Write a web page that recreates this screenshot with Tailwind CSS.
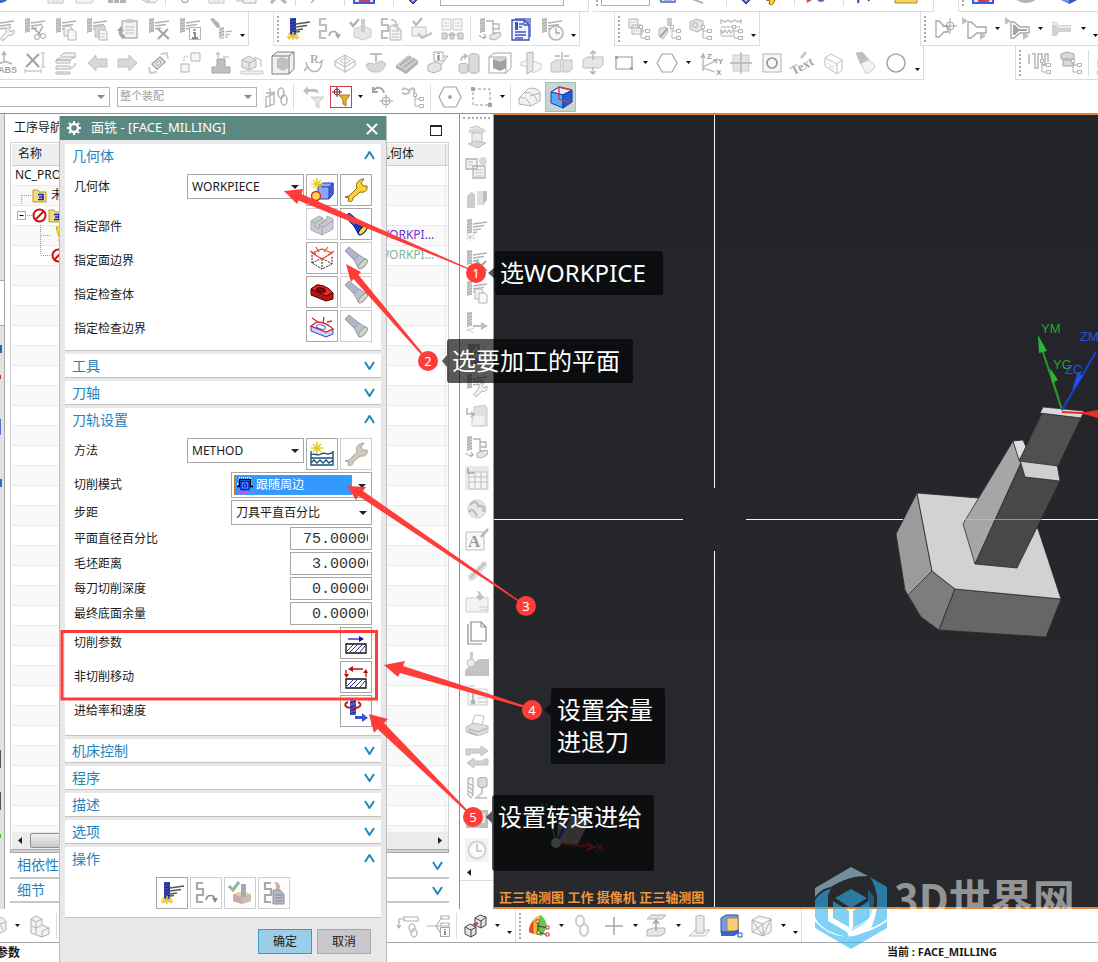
<!DOCTYPE html>
<html lang="zh-CN">
<head>
<meta charset="utf-8">
<meta name="viewport" content="width=device-width, initial-scale=1">
<title>面铣 - [FACE_MILLING]</title>
<script src="https://cdn.jsdelivr.net/npm/@tailwindcss/browser@4"></script>
</head>
<body class="relative flex h-screen flex-col overflow-hidden bg-white font-['Noto_Sans','Noto_Sans_CJK_SC',sans-serif] text-xs text-[#1a1a1a]">

<!-- Toolbars -->
<header class="shrink-0">
  <div class="flex h-3 items-end overflow-hidden">
    <div data-bar="globe ~ ~ page box hist iso | pin page copy xmark | curve ~ | redbox ~ | diamond ~ combo . ~" class="-ml-4 flex h-[34px] shrink-0 items-center border-r border-b border-[#dcdcdc] pb-1"></div>
    <div data-bar=": combos monitor axis ~ | diamond wrenchY | redarrow ~ | bluecurve ~ ruler ." class="ml-1 flex h-[34px] shrink-0 items-center border-r border-b border-[#dcdcdc] pb-1"></div>
    <div data-bar=": redbox ~ disc ~ bluecube" class="ml-6 flex h-[34px] flex-1 items-center border-b border-l border-[#dcdcdc] pb-1"></div>
  </div>
  <div class="flex h-[34px] overflow-hidden">
    <div data-bar="cutWrench cutScissors cutCopy cutPaste clipboard cutX cutInfo cutTorch _" class="-ml-3 flex shrink-0 items-center border-r border-b border-[#dcdcdc]"></div>
    <div data-bar=": generate path verify post okbox shop | machine report clock _" class="ml-6 flex shrink-0 items-center border-r border-b border-l border-[#dcdcdc]"></div>
    <div data-bar=": treeSheet treeDrill treeCube treeWave _" class="ml-[34px] flex shrink-0 items-center border-r border-b border-l border-[#dcdcdc]"></div>
    <div data-bar=": mill1 mill2 . mill3 . mill4 . _" class="ml-[160px] flex flex-1 items-center border-b border-l border-[#dcdcdc]"></div>
  </div>
  <div class="flex h-[34px] overflow-hidden">
    <div data-bar="abs xdim layers left right rotbox boxes pedestal isoRule cubeFrame rfit isoLines surface slab infoBox cylinders cubeFrame2 planeCut split splitV rectIcon . hexIcon . axes crossBox circleBox textIcon wireBox cone circle _" class="-ml-3 flex shrink-0 items-center border-r border-b border-[#dcdcdc]"></div>
    <div data-bar=": treePath treeBlocks | isoRule" class="ml-[91px] flex flex-1 items-center border-b border-l border-[#dcdcdc]"></div>
  </div>
  <div class="flex h-[33px] items-center overflow-hidden">
    <label class="relative -ml-px block w-[111px]"><select aria-label="过滤器" class="block h-[20px] w-full appearance-none border border-[#b4b4b4] bg-white"><option></option></select><svg class="pointer-events-none absolute top-2 right-[5px] h-1 w-2" viewBox="0 0 8 4"><path fill="#8a8a8a" d="M0 0h8L4 4z"/></svg></label>
    <label class="relative ml-[7px] block w-[140px]"><select aria-label="范围" class="block h-[20px] w-full appearance-none border border-[#b4b4b4] bg-white px-[2px] text-[11px] text-[#a0a0a0]"><option>整个装配</option></select><svg class="pointer-events-none absolute top-2 right-[5px] h-1 w-2" viewBox="0 0 8 4"><path fill="#8a8a8a" d="M0 0h8L4 4z"/></svg></label>
    <div data-bar="linkBox | undoFunnel filterOn . undoAxis undoTree | hexDot dashRect . | softBox cubeOn" class="ml-[3px] flex items-center"></div>
  </div>
</header>

<!-- Workspace -->
<main class="flex min-h-0 flex-1 border-t border-[#8d9298]">
  <div class="flex w-[5px] shrink-0 flex-col border-r border-[#a8a8a8] bg-[#e2e2e2]" aria-hidden="true">
    <div class="h-[167px] border-b border-[#a8a8a8]"></div>
    <div class="h-11 bg-white"></div>
    <div class="h-5 border-t border-[#a8a8a8]"></div>
    <div class="h-2 w-[2px] bg-[#2563c8]"></div>
    <div class="h-[22px]"></div>
    <div class="h-1 w-px bg-[#d03020]"></div>
    <div class="h-10"></div>
    <div class="h-4 w-px bg-[#4a74c8]"></div>
    <div class="h-11"></div>
    <div class="h-2 w-[2px] bg-[#3b66c4]"></div>
    <div class="h-[263px]"></div>
    <div class="h-[18px] w-px bg-[#555]"></div>
    <div class="h-6"></div>
    <div class="h-[18px] w-px bg-[#555]"></div>
    <div class="h-6"></div>
    <div class="h-1 w-px bg-[#40c020]"></div>
  </div>

  <section class="flex w-[454px] shrink-0 flex-col pr-[10px] pl-[5px]" aria-label="工序导航器">
    <div class="flex h-7 shrink-0 items-center justify-between pr-[7px] pl-1">
      <h2>工序导航器</h2>
      <button type="button" aria-label="最大化" class="mt-1 h-[11px] w-3 border border-t-2 border-[#222]"></button>
    </div>
    <div class="flex min-h-0 flex-1 flex-col border border-b-0 border-[#d2d2d2] p-px pr-0 pb-0">
      <div class="min-h-0 flex-1 overflow-hidden">
        <table class="w-full table-fixed border-collapse">
          <thead>
            <tr class="h-[21px] border-b border-[#cfcfcf] bg-[#efefef] text-left">
              <th class="w-[366px] pl-[6px] font-normal">名称</th>
              <th class="border-r border-[#cfcfcf] font-normal">几何体</th>
              <th class="w-[3px]"></th>
            </tr>
          </thead>
          <tbody id="rows">
            <tr class="h-5 border-b border-[#ebebeb] leading-none"><td class="pl-[3px]">NC_PROGRAM</td><td class="border-r border-[#ebebeb]"></td><td></td></tr>
            <tr class="h-5 border-b border-[#ebebeb] bg-[#f9f9f9] leading-none"><td><div class="flex h-[19px] items-center gap-1 pl-[9px]"><svg class="h-5 w-[10px] shrink-0" viewBox="0 0 10 20"><path d="M.5 10V20M1 10.500h9" stroke="#999" stroke-dasharray="1 1" fill="none"/></svg><svg class="-ml-[3px] h-4 w-[15px] shrink-0"><use href="#folder"/></svg>未用项</div></td><td class="border-r border-[#ebebeb]"></td><td></td></tr>
            <tr class="h-5 border-b border-[#ebebeb] leading-none"><td><div class="flex h-[19px] items-center pl-[5px]"><svg class="h-5 w-[15px] shrink-0" viewBox="0 0 15 20"><path d="M.5 6.500h8v8h-8z" fill="#fff" stroke="#aaa"/><path d="M2.500 10.500h4" stroke="#000"/><path d="M10 10.500h5" stroke="#999" stroke-dasharray="1 1"/></svg><svg class="h-[15px] w-[15px] shrink-0"><use href="#stop"/></svg><svg class="ml-px h-4 w-[15px] shrink-0"><use href="#folder"/></svg></div></td><td class="border-r border-[#ebebeb]"></td><td></td></tr>
            <tr class="h-5 border-b border-[#ebebeb] bg-[#f9f9f9] leading-none"><td><div class="flex h-[19px] items-center pl-7"><svg class="h-5 w-[15px] shrink-0" viewBox="0 0 15 20"><path d="M.5 0v20M1 10.500h9" stroke="#999" stroke-dasharray="1 1" fill="none"/></svg><svg class="h-[18px] w-3 shrink-0" viewBox="0 0 12 18"><path d="M1 1h9l-2 10H4zM4 13h4v3H4z" fill="#fde92c" stroke="#c9a800"/></svg></div></td><td class="border-r border-[#ebebeb] text-[#6a35d0]">WORKPI...</td><td></td></tr>
            <tr class="h-5 border-b border-[#ebebeb] leading-none"><td><div class="flex h-[19px] items-center pl-7"><svg class="h-5 w-[11px] shrink-0" viewBox="0 0 11 20"><path d="M.5 0v10M1 10.500h9" stroke="#999" stroke-dasharray="1 1" fill="none"/></svg><svg class="h-[15px] w-[15px] shrink-0"><use href="#stop"/></svg></div></td><td class="border-r border-[#ebebeb] text-[#7fb09c]">WORKPI...</td><td></td></tr>
          </tbody>
        </table>
      </div>
      <div class="flex h-[17px] shrink-0 items-center justify-between bg-[#ececec] px-[6px]" aria-hidden="true">
        <svg class="h-[7px] w-1" viewBox="0 0 4 7"><path d="M4 0v7L0 3.500z" fill="#222"/></svg>
        <div class="mr-40 ml-2 h-[15px] flex-1 rounded-[2px] border border-[#8f8f8f] bg-linear-to-b from-[#f2f2f2] to-[#c8c8c8]"></div>
        <svg class="h-[7px] w-1" viewBox="0 0 4 7"><path d="M0 0v7l4-3.500z" fill="#222"/></svg>
      </div>
    </div>
    <div class="h-1 shrink-0 border border-[#aaa] bg-[#d0d0d0]"></div>
    <button type="button" class="flex h-[26px] shrink-0 items-center justify-between border-b-2 border-[#c8c8c8] pr-[6px] pl-[7px] text-sm text-[#2483b9]">相依性<svg class="h-[9px] w-[11px]"><use href="#down"/></svg></button>
    <button type="button" class="flex h-6 shrink-0 items-center justify-between border-b-2 border-[#c8c8c8] pr-[6px] pl-[7px] text-sm text-[#2483b9]">细节<svg class="h-[9px] w-[11px]"><use href="#down"/></svg></button>
    <div class="h-[6px] shrink-0"></div>
  </section>

  <nav class="flex w-[34px] shrink-0 flex-col border-l border-[#8d9298]" aria-label="加工工具条">
    <div class="mx-[3px] mt-[3px] h-1 border-t-2 border-dotted border-[#aaa]"></div>
    <div data-bar="wheel wheelDoc mouldBox generate0 cutX cutCopy cutArrow boltBox cutWrench boxTurn machine gridBox globeG letterA pencil folderG pages ramp sheetPin printer swap drillCyl screen clockBig" class="flex flex-col items-center"></div>
    <div class="flex h-4 items-start border-b border-[#dcdcdc] pt-1 pl-[7px]"><svg class="h-[7px] w-1" viewBox="0 0 4 7"><path d="M4 0v7L0 3.500z" fill="#222"/></svg></div>
  </nav>

  <section class="relative min-w-0 flex-1 overflow-hidden border-t border-b-2 border-l border-[#e88a34] bg-linear-to-b from-[#232429] to-[#28292d]" aria-label="图形窗口">
    <svg class="absolute inset-0 h-full w-full" viewBox="494 115 604 792" preserveAspectRatio="xMinYMin slice" font-family="Liberation Sans, sans-serif" font-size="13">
      <path d="M714.500 114V488M714.500 551V908M494 519.500H683M746 519.500H1098" stroke="#f4f4f4"/>
      <g stroke="#2c2c2e" stroke-linejoin="round" stroke-width=".8">
        <path fill="#9b9b9b" d="M917 493L932 571 911 601 905 590 896 534z"/>
        <path fill="#7d7d7d" d="M932 571L955 589 939 630 921 617 908 595z"/>
        <path fill="#666" d="M955 589L1061 599 1046 637 939 630z"/>
        <path fill="#d2d2d2" d="M917 493L1003 500 1038 529 1061 599 955 589 932 571z"/>
        <path fill="#a6a6a6" d="M1013 441L1021 463 975 564 963 524z"/>
        <path fill="#484848" d="M1021 463L1060 481 1017 568 975 564z"/>
        <path fill="#cfcfcf" d="M1020 460L1057 464 1060 481 1025 477z"/>
        <path fill="#dedede" d="M1013 441L1023 440 1027 449 1019 460z"/>
        <path fill="#505050" d="M1042 413L1081 418 1058 466 1019 461z"/>
        <path fill="#d9d9d9" d="M1043 407L1084 411 1081 418 1040 413z"/>
      </g>
      <path d="M963 519.500H1043" stroke="#c8c8c8" stroke-opacity=".6"/>
      <path d="M1062 410L1041 346M1062 410L1052 378" stroke="#27962d" stroke-width="2"/><path d="M1038 335l9 16-8 2zM1050 368l8 12-6 3z" fill="#2fb336"/>
      <path d="M1062 410L1096 352" stroke="#1c3fd0" stroke-width="2"/><path d="M1078 372l5 5-11 13z" fill="#2450f0"/>
      <path d="M1062 412l36 2" stroke="#e03028" stroke-width="2"/><path d="M1098 410v8l-18-5z" fill="#e03028"/>
      <g fill="#27a52e"><text x="1041" y="333">YM</text><text x="1053" y="369">YC</text></g>
      <g fill="#2352e8"><text x="1080" y="341">ZM</text><text x="1065" y="374">ZC</text></g>
      <path fill="#8d8d8d" d="M558 822l16-8 15 8-12 24-20-4z"/><path d="M556 843l-7-30" stroke="#2c9632" stroke-width="2"/><path d="M556 843l13-24" stroke="#2444c8" stroke-width="3"/><path d="M556 843l37 4M586 843l9 4-9 3" stroke="#c03030" stroke-width="2"/><circle cx="556" cy="843" r="5" fill="#aaa"/>
      <text x="595" y="852" fill="#d03838">X</text><text x="540" y="812" fill="#2c9632">Y</text>
    </svg>
    <p class="absolute bottom-0 left-[5px] text-[13px] leading-5 font-bold whitespace-nowrap text-[#f0963c]">正三轴测图 工作 摄像机 正三轴测图</p>
  </section>
</main>

<footer class="shrink-0">
  <div class="flex h-[34px] overflow-hidden border-b border-[#a8a8a8]">
    <div data-bar="softBox . isoStack | pad linkArrow treeInfo | twoCubes . _" class="-ml-5 flex shrink-0 items-center border-r border-[#dcdcdc]"></div>
    <div data-bar=": rainbow . chain plus . liftBox . cylPlane coloredBox meshBox . _" class="flex items-center border-r border-[#dcdcdc]"></div>
  </div>
  <div class="flex h-[19px] items-center font-bold">
    <span class="-ml-1 w-[891px]">参数</span><span class="text-[11px] whitespace-nowrap">当前 : FACE_MILLING</span>
  </div>
</footer>

<!-- Floating operation dialog -->
<form class="absolute top-[116px] bottom-0 left-[59px] flex w-[328px] flex-col border-r border-l border-[#bcbcbc] bg-[#e8e8e8]" role="dialog" aria-label="面铣">
  <div class="mb-1 flex h-6 shrink-0 items-center bg-[#5b8982] pr-2 pl-[7px] text-[13px] text-white">
    <svg class="mr-[10px] h-[14px] w-[14px]" viewBox="0 0 14 14"><circle cx="7" cy="7" r="4" fill="none" stroke="#fff" stroke-width="2.400"/><path d="M7 0v3M7 11v3M0 7h3M11 7h3M2 2l2 2M10 10l2 2M12 2l-2 2M4 10l-2 2" stroke="#fff" stroke-width="2"/></svg>
    <span class="flex-1">面铣 - [FACE_MILLING]</span>
    <button type="button" aria-label="关闭"><svg class="mt-[2px] h-3 w-3" viewBox="0 0 12 12"><path d="M1 1l10 10M11 1L1 11" stroke="#fff" stroke-width="2"/></svg></button>
  </div>
  <div class="flex shrink-0 flex-col gap-[3px] px-[5px]">
    <section class="border-b border-[#c4c4c4] bg-white">
      <button type="button" class="flex h-[23px] w-full items-center justify-between pr-[6px] pl-[7px] text-sm text-[#2483b9]">几何体<svg class="h-[9px] w-[11px]"><use href="#up"/></svg></button>
      <div class="flex flex-col gap-[2px] px-[9px] pt-[7px] pb-2">
        <div class="flex gap-[2px]"><label for="geo" class="flex h-[25px] flex-1 items-center">几何体</label>
          <span class="relative block w-[117px]"><select id="geo" class="block h-[25px] w-full appearance-none border border-[#a8a8a8] bg-white pl-1"><option>WORKPIECE</option></select><svg class="pointer-events-none absolute top-[11px] right-[5px] h-1 w-2" viewBox="0 0 8 4"><path d="M0 0h8L4 4z" fill="#222"/></svg></span>
          <button type="button" data-icon="newGeo" aria-label="新建几何体" class="flex size-8 items-center justify-center border border-[#a8a8a8]"></button><button type="button" data-icon="wrenchY" aria-label="编辑几何体" class="flex size-8 items-center justify-center border border-[#a8a8a8]"></button></div>
        <div class="flex gap-[2px]"><span class="flex flex-1 items-center pt-1.5">指定部件</span><button type="button" data-icon="part" aria-label="选择部件" class="flex size-8 items-center justify-center border border-[#cfcfcf]"></button><button type="button" data-icon="torchOn" aria-label="显示部件" class="flex size-8 items-center justify-center border border-[#a8a8a8]"></button></div>
        <div class="flex gap-[2px]"><span class="flex flex-1 items-center pt-1.5">指定面边界</span><button type="button" data-icon="faceBound" aria-label="选择面边界" class="flex size-8 items-center justify-center border border-[#a8a8a8]"></button><button type="button" data-icon="torch" aria-label="显示面边界" class="flex size-8 items-center justify-center border border-[#cfcfcf]"></button></div>
        <div class="flex gap-[2px]"><span class="flex flex-1 items-center pt-1.5">指定检查体</span><button type="button" data-icon="checkBody" aria-label="选择检查体" class="flex size-8 items-center justify-center border border-[#a8a8a8]"></button><button type="button" data-icon="torch" aria-label="显示检查体" class="flex size-8 items-center justify-center border border-[#cfcfcf]"></button></div>
        <div class="flex gap-[2px]"><span class="flex flex-1 items-center pt-1.5">指定检查边界</span><button type="button" data-icon="checkBound" aria-label="选择检查边界" class="flex size-8 items-center justify-center border border-[#a8a8a8]"></button><button type="button" data-icon="torch" aria-label="显示检查边界" class="flex size-8 items-center justify-center border border-[#cfcfcf]"></button></div>
      </div>
    </section>
    <button type="button" class="flex h-6 w-full items-center justify-between border-b border-[#c4c4c4] bg-white pr-[6px] pl-[7px] text-sm text-[#2483b9]">工具<svg class="h-[9px] w-[11px]"><use href="#down"/></svg></button>
    <button type="button" class="flex h-6 w-full items-center justify-between border-b border-[#c4c4c4] bg-white pr-[6px] pl-[7px] text-sm text-[#2483b9]">刀轴<svg class="h-[9px] w-[11px]"><use href="#down"/></svg></button>
    <section class="border-b border-[#c4c4c4] bg-white">
      <button type="button" class="flex h-[23px] w-full items-center justify-between pr-[6px] pl-[7px] text-sm text-[#2483b9]">刀轨设置<svg class="h-[9px] w-[11px]"><use href="#up"/></svg></button>
      <div class="flex flex-col gap-[2px] px-[9px] pt-[7px] pb-2">
        <div class="flex gap-[2px]"><label for="method" class="flex h-[25px] flex-1 items-center">方法</label>
          <span class="relative block w-[117px]"><select id="method" class="block h-[25px] w-full appearance-none border border-[#a8a8a8] bg-white pl-1"><option>METHOD</option></select><svg class="pointer-events-none absolute top-[11px] right-[5px] h-1 w-2" viewBox="0 0 8 4"><path d="M0 0h8L4 4z" fill="#222"/></svg></span>
          <button type="button" data-icon="newMethod" aria-label="新建方法" class="flex size-8 items-center justify-center border border-[#a8a8a8]"></button><button type="button" data-icon="wrenchG" aria-label="编辑方法" class="flex size-8 items-center justify-center border border-[#cfcfcf]"></button></div>
        <div class="flex items-center"><label for="mode" class="flex-1">切削模式</label>
          <span class="relative flex h-[26px] w-[141px] items-center border border-[#a8a8a8] p-[2px]"><select id="mode" class="h-5 w-[118px] appearance-none border border-dotted border-[#d08030] bg-[#3399ff] pl-[21px] text-white"><option>跟随周边</option></select>
            <svg class="pointer-events-none absolute top-1 left-[5px] h-4 w-4" viewBox="0 0 16 16"><path d="M0 7h2V1h12v6h2" fill="none" stroke="#fff" stroke-width="2" stroke-dasharray="1 1"/><path d="M0 9.500h2.500V2.500h11v7H16" fill="none" stroke="#000" stroke-width="1.600"/><path d="M4 4.500h8v8H4z" fill="#4a90ff" stroke="#0010d8" stroke-width="1.300"/><path d="M6.500 7h3v3h-3z" fill="none" stroke="#0010d8"/><path d="M0 15.500h16" stroke="#f040e0" stroke-dasharray="4 1 1 1"/></svg>
            <svg class="pointer-events-none absolute top-[11px] right-[5px] h-1 w-2" viewBox="0 0 8 4"><path d="M0 0h8L4 4z" fill="#222"/></svg></span></div>
        <div class="flex items-center"><label for="step" class="flex-1">步距</label>
          <span class="relative block w-[141px]"><select id="step" class="block h-[25px] w-full appearance-none border border-[#a8a8a8] bg-white pl-1"><option>刀具平直百分比</option></select><svg class="pointer-events-none absolute top-[11px] right-[5px] h-1 w-2" viewBox="0 0 8 4"><path d="M0 0h8L4 4z" fill="#222"/></svg></span></div>
        <div class="flex items-center"><label for="pct" class="flex-1">平面直径百分比</label><span class="flex h-[23px] w-[82px] overflow-hidden border border-[#a8a8a8] pr-[3px]"><input id="pct" value="75.00000" class="w-full min-w-0 pt-[2px] pl-3 font-['Liberation_Mono',monospace] text-[15px] text-[#333] outline-none"></span></div>
        <div class="flex items-center"><label for="blank" class="flex-1">毛坯距离</label><span class="flex h-[23px] w-[82px] overflow-hidden border border-[#a8a8a8] pr-[3px]"><input id="blank" value="3.00000" class="w-full min-w-0 pt-[2px] pl-[21px] font-['Liberation_Mono',monospace] text-[15px] text-[#333] outline-none"></span></div>
        <div class="flex items-center"><label for="depth" class="flex-1">每刀切削深度</label><span class="flex h-[23px] w-[82px] overflow-hidden border border-[#a8a8a8] pr-[3px]"><input id="depth" value="0.00000" class="w-full min-w-0 pt-[2px] pl-[21px] font-['Liberation_Mono',monospace] text-[15px] text-[#333] outline-none"></span></div>
        <div class="flex items-center"><label for="stock" class="flex-1">最终底面余量</label><span class="flex h-[23px] w-[82px] overflow-hidden border border-[#a8a8a8] pr-[3px]"><input id="stock" value="0.00000" class="w-full min-w-0 pt-[2px] pl-[21px] font-['Liberation_Mono',monospace] text-[15px] text-[#333] outline-none"></span></div>
        <div class="flex items-center justify-between">切削参数<button type="button" data-icon="cutParam" aria-label="切削参数" class="flex size-8 items-center justify-center border border-[#a8a8a8]"></button></div>
        <div class="flex items-center justify-between">非切削移动<button type="button" data-icon="nonCut" aria-label="非切削移动" class="flex size-8 items-center justify-center border border-[#a8a8a8]"></button></div>
        <div class="flex items-center justify-between">进给率和速度<button type="button" data-icon="feed" aria-label="进给率和速度" class="flex size-8 items-center justify-center border border-[#a8a8a8]"></button></div>
      </div>
    </section>
    <button type="button" class="flex h-6 w-full items-center justify-between border-b border-[#c4c4c4] bg-white pr-[6px] pl-[7px] text-sm text-[#2483b9]">机床控制<svg class="h-[9px] w-[11px]"><use href="#down"/></svg></button>
    <button type="button" class="flex h-6 w-full items-center justify-between border-b border-[#c4c4c4] bg-white pr-[6px] pl-[7px] text-sm text-[#2483b9]">程序<svg class="h-[9px] w-[11px]"><use href="#down"/></svg></button>
    <button type="button" class="flex h-6 w-full items-center justify-between border-b border-[#c4c4c4] bg-white pr-[6px] pl-[7px] text-sm text-[#2483b9]">描述<svg class="h-[9px] w-[11px]"><use href="#down"/></svg></button>
    <button type="button" class="flex h-6 w-full items-center justify-between border-b border-[#c4c4c4] bg-white pr-[6px] pl-[7px] text-sm text-[#2483b9]">选项<svg class="h-[9px] w-[11px]"><use href="#down"/></svg></button>
    <section class="border-b border-[#c4c4c4] bg-white">
      <button type="button" class="flex h-[23px] w-full items-center justify-between pr-[6px] pl-[7px] text-sm text-[#2483b9]">操作<svg class="h-[9px] w-[11px]"><use href="#up"/></svg></button>
      <div class="flex justify-center gap-[2px] pt-[7px] pb-2">
        <button type="button" data-icon="generate" aria-label="生成" class="flex size-8 items-center justify-center border border-[#a8a8a8]"></button>
        <button type="button" data-icon="path" aria-label="重播" class="flex size-8 items-center justify-center border border-[#cfcfcf]"></button>
        <button type="button" data-icon="verifyC" aria-label="确认" class="flex size-8 items-center justify-center border border-[#cfcfcf]"></button>
        <button type="button" data-icon="postC" aria-label="列表" class="flex size-8 items-center justify-center border border-[#cfcfcf]"></button>
      </div>
    </section>
  </div>
  <div class="flex shrink-0 justify-end gap-[5px] pt-[11px] pr-[15px]">
    <button type="submit" class="h-[25px] w-[54px] border border-[#3f97c9] bg-[#9bcde8]">确定</button>
    <button type="button" class="h-[25px] w-[54px] border border-[#a8a8a8] bg-[#c9c9cd]">取消</button>
  </div>
</form>

<!-- Tutorial annotations over the workspace -->
<svg class="pointer-events-none absolute top-0 left-0" width="1098" height="962" viewBox="0 0 1098 962" font-family="Noto Sans, sans-serif" font-size="13" text-anchor="middle" aria-hidden="true">
  <path d="M62 631.500H376.500V699H62z" fill="none" stroke="#fe3c39" stroke-width="3"/>
  <g fill="#fe3c39">
    <path d="M284 191L303 189 301.500 194 476 271.500V272.500L298.500 200.500 297 204z"/>
    <path d="M346 264L361 272 358.500 275 429 361H427L353.500 279 351 282z"/>
    <path d="M347 486L366 487 363 491 527 606H525L358.500 496 356 500z"/>
    <path d="M384 665L405 661 403 666 532 708V710L400 673 398 677z"/>
    <path d="M369 714L388 719 384 723 474 817H472L377.500 729 374 733z"/>
  </g>
  <g fill="#fe3c39"><circle cx="476" cy="273" r="10"/><circle cx="428" cy="361" r="10"/><circle cx="526" cy="606" r="10"/><circle cx="532" cy="710" r="10"/><circle cx="473" cy="817" r="10"/></g>
  <g fill="#fff"><text x="476" y="278">1</text><text x="428" y="366">2</text><text x="526" y="611">3</text><text x="532" y="715">4</text><text x="473" y="822">5</text></g>
  <path d="M495 267v12l-7-6zM447 355v12l-5-6zM551 704v12l-7-6zM492 811v12l-6-6z" fill="#000" fill-opacity=".65"/>
</svg>
<div class="absolute top-[251px] left-[495px] rounded-[3px] bg-black/65 py-[6px] pr-[17px] pl-[5px] text-2xl text-white">选WORKPICE</div>
<div class="absolute top-[339px] left-[447px] rounded-[3px] bg-black/65 py-[6px] pr-[13px] pl-[5px] text-2xl text-white">选要加工的平面</div>
<div class="absolute top-[688px] left-[551px] rounded-[3px] bg-black/65 py-[6px] pr-3 pl-[6px] text-2xl text-white">设置余量<br>进退刀</div>
<div class="absolute top-[795px] left-[492px] h-[76px] rounded-[3px] bg-black/65 py-[6px] pr-3 pl-[6px] text-2xl text-white">设置转速进给</div>

<!-- Site watermark -->
<div class="absolute top-[867px] left-[815px] flex items-start gap-[7px]">
  <svg class="h-[82px] w-[72px]" viewBox="0 0 72 82"><g fill="#2db0f0" fill-opacity=".6"><path d="M36 0L53 9C40 9 28 12 16 20 9 21 4 25 0 30V21z" fill="#a6d2e4"/><path d="M55 10L72 20V52C67 56 62 59 56 61 64 44 65 26 55 10z"/><path d="M0 33C5 26 10 23 16 22L13 28V54L32 65 34 70C18 68 4 60 0 50z"/><path d="M0 54C10 66 28 74 45 67 55 64 66 59 72 54V61L36 82 0 61z"/><path d="M53 22V50L38 59 36 64C48 60 60 50 59 30z" fill-opacity=".35"/><path d="M36 22L52 31 36 41 20 31z"/><path d="M18 34L34 44V60L18 51z"/><path d="M54 34L38 44V60L54 51z"/></g></svg>
  <span class="mt-3 font-['Noto_Sans_CJK_SC',sans-serif] text-[42px] leading-9 font-bold whitespace-nowrap text-white/50">3D世界网</span>
</div>

<svg class="hidden" aria-hidden="true">
  <symbol id="up" viewBox="0 0 11 9"><path d="M1 8l4.500-7L10 8" fill="none" stroke="#2387b8" stroke-width="2"/></symbol>
  <symbol id="down" viewBox="0 0 11 9"><path d="M1 1l4.500 7L10 1" fill="none" stroke="#2387b8" stroke-width="2"/></symbol>
  <symbol id="folder" viewBox="0 0 15 16"><path d="M1 3h5l1 2h7v10H1z" fill="#f5dc7a" stroke="#b89a35"/><path d="M6 7.500h5v5H6M7 10h4" stroke="#1020c8" stroke-width="1.500" fill="none"/></symbol>
  <symbol id="stop" viewBox="0 0 15 15"><circle cx="7.500" cy="7.500" r="6" fill="#fff" stroke="#cc1010" stroke-width="2"/><path d="M3.500 11.500l8-8" stroke="#cc1010" stroke-width="2"/></symbol>
</svg>

<script>
const cut = '<path d="M2 1h5v14H2z" fill="#bbb"/><path d="M2 4l5-2M2 7l5-2M2 10l5-2M2 13l5-2M2 15.500l5-2" stroke="#8c8c8c"/>';
const fins = '<path d="M8 6l14-2M8 9l11-1.500M8 12l6-1" stroke="#999" stroke-width="1.300"/>';
const tree = '<path d="M14 10v11h4M14 14h4" stroke="#999"/><path d="M18.500 12.500h4v3h-4zM18.500 19.500h4v3h-4zM12.500 8.500h3v3h-3z" stroke="#999" fill="#fff"/>';
const spanner = '<path d="M9 21l5-6c-1-3 2-6 5-5l-2 3 2 2 3-2c1 4-2 6-5 5l-5 5c-2 1-4-1-3-2z" stroke="#999" fill="#eee"/>';
const cube = '<path d="M3 8l9-4 9 4v9l-9 5-9-5z" fill="#dcdcdc" stroke="#aaa"/><path d="M3 8l9 4 9-4M12 12v10" stroke="#aaa"/>';
const sheet = '<path d="M11 9h7l4 4v10H11z" fill="#f2f2f2" stroke="#999"/><path d="M13 14h7M13 17h7M13 20h7M18 9v4h4" stroke="#aaa"/>';
const snake = '<path d="M9 2H3v6h6v6H3v7h6" stroke="#aaa" stroke-width="2.200"/>';
const mill = '<path d="M3 4h3l6 5h9v6h-9l-6 5H3z" stroke="#888" fill="#fff" stroke-width="1.300"/>';
const axes = '<path d="M5 20V4M3 7l2-4 2 4M5 16l14-7M5 17l12 4M15 9l4-.500-1 4" stroke="#999" stroke-width="1.300"/>';
const torchShape = (body, head, lens, line) => '<path d="M1 5L5 1l10 8-5 5z" fill="' + body + '" stroke="' + line + '"/><path d="M10 14l5-5 8 5c0 4-4 8-8 9z" fill="' + head + '" stroke="' + line + '"/><ellipse cx="19" cy="18" rx="2.500" ry="6" transform="rotate(42 19 18)" fill="' + lens + '" stroke="' + line + '"/>';
const icons = {
  globe: '<circle cx="12" cy="12" r="10" fill="#2c9f48"/><path d="M12 22a10 10 0 0 0 10-10l-10-4z" fill="#3568c8"/>',
  page: '<path d="M5 2h15v20H5z" fill="#f2f2f2" stroke="#aaa"/><path d="M8 14h9M8 17h9M8 20h9" stroke="#ccc"/>',
  box: '<path d="M2 8h15l5 3-4 11H2z" fill="#eee" stroke="#b8b8b8"/>',
  hist: '<path d="M3 14h5v8H3zM9 10h5v12H9zM15 13h6v9h-6z" fill="#999"/>',
  iso: cube + '<circle cx="17" cy="17" r="5" stroke="#aaa" fill="#eee"/>',
  pin: '<path d="M12 2v12" stroke="#aaa"/><circle cx="12" cy="18" r="3.500" stroke="#999" stroke-width="1.500"/>',
  copy: '<path d="M2 6h13v14H2z" stroke="#aaa" fill="#fff"/><path d="M8 10h13v12H8z" stroke="#999" fill="#f2f2f2"/><path d="M10 15h9M10 18h9" stroke="#bbb"/>',
  xmark: '<path d="M4 8l16 14M20 6L5 22" stroke="#999" stroke-width="3"/>',
  curve: '<path d="M18 4c-2 10-6 14-10 18" stroke="#999" stroke-width="1.500"/>',
  redbox: '<path d="M2 2h20v20H2z" stroke="#3a5be0" stroke-width="2" fill="#dfe6ff"/><path d="M8 8v12h10M8 14l10 6" stroke="#d04050" stroke-width="2"/>',
  diamond: '<path d="M3 14l9-8 9 8-9 9z" fill="#4a5cb8" stroke="#223080"/><path d="M7 14l5 7 5-7" fill="#cfd6ff"/>',
  monitor: '<path d="M7 8h14v13H7z" fill="#dfe4fb" stroke="#5060c0" stroke-width="1.500"/><path d="M10 16h8M10 19h8" stroke="#7080d0"/><path d="M1 16l6 3" stroke="#50a050" stroke-width="2"/>',
  axis: '<path d="M4 17l14 5M4 17l5-5M8 13H4v4" stroke="#888" stroke-width="1.500"/>',
  redarrow: '<path d="M3 10l12 6-10 6z" fill="#d84a40"/><circle cx="19" cy="17" r="4" fill="#536cb8"/>',
  bluecurve: '<path d="M6 10c-3 4 3 6 1 12M14 10l4 10" stroke="#3040b0" stroke-width="2"/><path d="M12 8l8 8" stroke="#d04040" stroke-width="2"/>',
  ruler: '<path d="M1 14h22v8H1z" fill="#f3d568" stroke="#b08a20"/><path d="M4 14v4M7 14v3M10 14v4M13 14v3M16 14v4M19 14v3" stroke="#a07818"/>',
  disc: '<ellipse cx="12" cy="15" rx="11" ry="7" fill="#999"/><ellipse cx="12" cy="14" rx="5" ry="3" fill="#eee"/>',
  bluecube: '<path d="M2 9l10 4 10-4v9l-10 5-10-5z" fill="#6f8fe0"/><path d="M12 13l10-4v9l-10 5z" fill="#3558c0"/>',
  cutWrench: cut + fins + spanner,
  cutScissors: cut + fins + '<path d="M9 10l9 8M20 9l-5 9" stroke="#888" stroke-width="1.500"/><circle cx="14" cy="20" r="2.500" stroke="#888"/><circle cx="20" cy="19" r="2.500" stroke="#888"/>',
  cutCopy: cut + fins + '<path d="M10 9h6l2 2v8h-8z" fill="#eee" stroke="#999"/><path d="M14 13h6l2 2v8h-8z" fill="#f8f8f8" stroke="#999"/>',
  cutPaste: cut + fins + '<path d="M10 9h10v11H10z" fill="#ccc" stroke="#aaa"/><path d="M14 13h6l2 2v8h-8z" fill="#f4f4f4" stroke="#999"/><path d="M15 17h5M15 20h5" stroke="#bbb"/>',
  clipboard: '<path d="M6 4h15v17H6z" fill="#eee" stroke="#999" stroke-width="1.300"/><path d="M10 2h7v4h-7z" fill="#bbb"/><path d="M9 10h9M9 13h9M9 16h9" stroke="#aaa"/><path d="M9 21C4 21 2 18 3 14L1 14l4-5 3 5H6c-1 3 1 4 3 4z" fill="#888"/>',
  cutX: cut + fins + '<path d="M11 12l11 10M21 12L11 22" stroke="#888" stroke-width="2.200"/>',
  cutInfo: cut + fins + '<path d="M11.500 10.500h11v12h-11z" fill="#fff" stroke="#999"/><path d="M15 16h2v5M14 21h6M16.500 12v2" stroke="#666" stroke-width="2"/>',
  cutTorch: '<path d="M1 2l3-1 6 5 1 4-3 1-4-5z" fill="#999"/><path d="M10 10h5v12h-5z" fill="#c8c8c8"/><path d="M10 13l5-2M10 16l5-2M10 19l5-2" stroke="#888"/><path d="M16 15l7-1M16 18l5-1M16 20h3" stroke="#888"/>',
  generate: '<path d="M4 1h6v17H4z" fill="#3a48c0"/><path d="M4 4l6-2M4 7l6-2M4 10l6-2M4 13l6-2M4 16l6-2" stroke="#16207a"/><path d="M10 7l14-2M10 10l11-1.500M10 13l7-1M10 15l4-.500" stroke="#555" stroke-width="1.300"/><path d="M2 22l10-5M2 17l10 5M7 15v8M1 20h12" stroke="#e8c840" stroke-width="1.500"/>',
  generate0: cut + '<path d="M8 6l14-2M8 9l11-1.500M8 12l8-1M8 15l4-1" stroke="#999" stroke-width="1.500"/><path d="M1 21l9-4M1 17l9 4M5 16v7" stroke="#bbb"/>',
  path: snake + '<path d="M12 19c1-6 8-6 9 0" stroke="#8c8c8c" stroke-width="1.700"/><path d="M18 17h6l-3 5z" fill="#8c8c8c"/>',
  verify: '<path d="M6 12l9-3 8 3v8l-8 3-9-3z" fill="#ddd" stroke="#bbb"/><path d="M13 2h4v13h-4z" fill="#bbb"/><path d="M2 5l3 4 6-7" stroke="#999" stroke-width="2.400"/>',
  verifyC: '<path d="M5 13l9-3 9 3v7l-9 3-9-3z" fill="#e5d49a"/><path d="M14 16l9-3v7l-9 3z" fill="#cdbcb4"/><path d="M5 13l9 3v7l-9-3z" fill="#ccaaa8"/><path d="M13 3h5v13h-5z" fill="#a6a8bc"/><path d="M1 5l4 4 6-8" stroke="#8fb89a" stroke-width="3"/>',
  post: snake + '<path d="M12 2c5 0 6 2 6 5l3-1-4 5-4-4 3 0c0-2-1-3-4-3z" fill="#bbb"/>' + sheet,
  postC: snake + '<path d="M12 1c6 0 7 4 5 9h-4c2-4 1-6-1-9z" fill="#d8ae9c"/><path d="M11 9h7l4 4v10H11z" fill="#b6b8c4" stroke="#8e909c"/><path d="M13 14h7M13 17h7M13 20h7" stroke="#888"/>',
  okbox: '<path d="M2 10h14v9H2z" fill="#eee" stroke="#aaa"/><path d="M3 4l3 4 6-7" stroke="#999" stroke-width="2"/><path d="M8 16l4 5 10-5" stroke="#aaa" stroke-width="2"/>',
  shop: '<path d="M1 2h9v11H1zM12 2h9v11h-9z" fill="#f4f4f4" stroke="#b4b4b4"/><path d="M3 6h5M3 9h5M14 6h5M14 9h5" stroke="#bbb"/><path d="M1 16h5v6H1zM9 16h4v6H9zM17 16h5v6h-5zM6 18h11" fill="#ccc" stroke="#999"/>',
  machine: cut + '<path d="M8 4h7v12h5M15 7h6v5h-6" stroke="#999" stroke-width="1.400"/><path d="M12 18l10-3 1 4-6 4-5-1z" fill="#ddd" stroke="#999"/><path d="M1 18c2 3 4 3 7 2M6 17l2 3-3 2" stroke="#999" stroke-width="1.300"/>',
  report: '<path d="M6 1h16v19H6z" fill="#8494dc"/><path d="M3 3h12l5 5v15H3z" fill="#eef1ff" stroke="#3a4cb4" stroke-width="1.300"/><path d="M6 15h11M6 18h11M6 21h8M15 3v5h5M10 7h4M10 10h3" stroke="#4456b0" stroke-width="1.300"/><path d="M6 5h3v8H6z" fill="#4456b0"/>',
  clock: cut + fins + '<circle cx="16" cy="16" r="7" fill="#f6f6f6" stroke="#999" stroke-width="1.500"/><path d="M16 11v5h4" stroke="#888" stroke-width="1.300"/>',
  treeSheet: '<path d="M2 2h9v9H2zM5 8h10v9H5z" fill="#eee" stroke="#999"/><path d="M4 5h5M7 11h6M7 14h6" stroke="#999" stroke-dasharray="1 1"/>' + tree,
  treeDrill: '<path d="M9 1h5v8H9z" fill="#bbb"/><path d="M1 12l6-2 3 5-5 7-4-3z" fill="#ddd" stroke="#999"/><path d="M2 20l8-9" stroke="#888" stroke-width="2"/>' + tree,
  treeCube: '<path d="M1 5l6-3 7 2v8l-6 3-7-3z" fill="#ddd" stroke="#999"/><circle cx="6" cy="8" r="2.500" stroke="#999"/>' + tree,
  treeWave: '<path d="M1 7V3l4 2 3-2 3 2 4-2 3 2 3-2v4M1 10h19M1 18v-5l2 3 2-3 2 3 2-3 2 3 2-3M1 19h12" stroke="#999" stroke-width="1.200"/>' + tree,
  mill1: '<path d="M3 4h3l5 5h4v6h-4l-5 5H3z" stroke="#888" fill="#fff" stroke-width="1.300"/><circle cx="17" cy="9" r="4" stroke="#888"/><path d="M17 1v16M9 9h15" stroke="#888"/>',
  mill2: '<path d="M-2 0l6 4-6 4z" fill="#aaa"/><g transform="translate(1 1)">' + mill + '</g><path d="M16 15l6 4-6 4z" fill="#aaa"/>',
  mill3: '<path d="M-2 0l6 4-6 4z" fill="#aaa"/><g transform="translate(1 1)">' + mill + '</g><path d="M6 8h2l4 4h8v2h-8l-4 4H6z" fill="#888"/><path d="M16 15l6 4-6 4z" fill="#aaa"/>',
  mill4: '<path d="M2 5h5l2 3h12v7H9l-2 4H2z" fill="#c4c4c4"/><path d="M2 7h5l2 3h12" stroke="#e4e4e4" stroke-width="2"/>',
  abs: '<path d="M12 12V2M10 4l2-3 2 3M12 10l8 3M12 11l-6 2" stroke="#999" stroke-width="1.400"/><text x="6" y="22" font-size="9" font-weight="bold" font-family="Liberation Sans" fill="#888">ABS</text>',
  xdim: '<path d="M4 3l12 13M16 3L3 16" stroke="#888" stroke-width="2.200"/><path d="M18 2h4M20 3v12M18 16h4M2 18v4M3 20h14M18 18v4" stroke="#999"/>',
  layers: '<path d="M2 9l5-3h14l-5 3zM2 9h14v3H2zM2 15h14v3H2zM16 18l5-3v-3M2 21h14v2H2zM6 5l4-3h11v5" stroke="#999" fill="#eee"/>',
  left: '<path d="M3 12l8-8v4h11v8H11v4z" fill="#ccc" stroke="#aaa"/>',
  right: '<path d="M21 12l-8-8v4H2v8h11v4z" fill="#ccc" stroke="#aaa"/>',
  rotbox: '<path d="M5 13l8-7 5 5-8 7z" stroke="#888" fill="#eee" stroke-width="1.500"/><path d="M9 12l4-3 1 3-4 3z" stroke="#888"/><path d="M14 3l6-1 1 6M10 21l-7 1-1-6" stroke="#bbb" stroke-width="1.800"/>',
  boxes: '<path d="M13 2h9v8h-9zM3 13h8v8H3z" stroke="#999" fill="#f4f4f4"/><path d="M6 10V6l4-1" stroke="#999" stroke-dasharray="2 1"/>',
  pedestal: '<path d="M8 8h8v8h5v6H3v-6h5z" fill="#aaa" stroke="#888"/><path d="M9 7V2M7 4l2-3 2 3M14 6h6" stroke="#999"/>',
  isoRule: '<path d="M2 9l7-4 7 4v7l-7 3-7-3z" fill="#ddd" stroke="#999"/><path d="M2 9l7 3 7-3M9 12v7M14 6l7 3v7" stroke="#999"/><path d="M1 20h22v3H1z" stroke="#bbb" fill="#eee"/>',
  cubeFrame: '<path d="M1 5l5-4h17v17l-5 5H1zM1 5h17v18M18 5l5-4" stroke="#555" fill="#ececec"/><path d="M6 8l5-2 6 2v9l-5 3-6-3z" fill="#aaa"/>',
  rfit: '<text x="8" y="12" font-size="12" font-weight="bold" font-family="Liberation Serif" fill="#999">R</text><path d="M4 11c2 12 15 14 16-1M2 20l4-5M17 12l4-3" stroke="#999" stroke-width="1.500"/>',
  isoLines: '<path d="M2 10l10-6 10 6-10 6zM2 15l10 6 10-6M2 10v5M22 10v5M12 4v18" stroke="#999" fill="none"/><path d="M7 10l5-3 5 3-5 3z" stroke="#aaa"/>',
  surface: '<path d="M2 14c4-5 8 2 12-3 4-2 6 0 8 2-2 5-4 8-9 8-3 0-8 1-11-7z" fill="#ccc" stroke="#aaa"/><path d="M6 3h12M12 3v8" stroke="#aaa" stroke-width="2"/>',
  slab: '<path d="M1 14L13 4l10 5-12 10z" fill="#bbb"/><path d="M1 14l10 5v4L1 17zM11 19L23 9v4L11 23z" fill="#999"/><path d="M5 14L16 6M9 16L20 8" stroke="#888" stroke-width="1.500"/>',
  infoBox: '<path d="M8 1h9v9H8z" stroke="#888" fill="#fff"/><path d="M12.500 2v1M12.500 4v5" stroke="#555" stroke-width="2"/><path d="M2 14l7-3 6 2v6l-7 3-6-2zM15 14l7-9h-4" fill="#ddd" stroke="#999"/>',
  cylinders: '<path d="M12 5c0-3 10-3 10 0v15c0 3-10 3-10 0zM2 14c0-2 9-2 9 0v6c0 3-9 3-9 0z" fill="#d0d0d0" stroke="#999"/><path d="M4 10c0-4 2-5 5-5M7 3l3 2-3 3" stroke="#999" stroke-width="1.400"/>',
  cubeFrame2: '<path d="M1 6l5-4h17v15l-5 5H1zM1 6h17v16" stroke="#888" fill="none"/><path d="M5 8l7-2 6 2v9l-6 3-7-3z" fill="#7f7f7f"/><path d="M5 8l7 3 6-3-6-2z" fill="#c8c8c8"/>',
  planeCut: '<path d="M8 2l6-1v18l-6 4z" fill="#ddd" stroke="#999"/><path d="M1 12l7-3v7l-7-2zM14 10l8 3v5l-8 4z" stroke="#bbb" fill="#f2f2f2"/>',
  split: '<path d="M1 12l5-3h5v12H1zM13 9h9v9l-3 3h-6z" fill="#d8d8d8" stroke="#aaa"/><path d="M12 1v8M5 5h5M14 5h5" stroke="#999" stroke-width="1.300"/>',
  splitV: '<path d="M2 9l4-3h16v8l-4 3H2z" fill="#ddd" stroke="#aaa"/><path d="M12 0v9M12 16v7M9 20l3 3 3-3M9 3l3-3 3 3" stroke="#999" stroke-width="1.300"/>',
  rectIcon: '<path d="M4 6h16v12H4z" stroke="#777" stroke-width="1.200"/><path d="M3 5h3v3H3zM18 16h3v3h-3z" fill="#888"/>',
  hexIcon: '<path d="M7 3h10l5 9-5 9H7l-5-9z" stroke="#888" stroke-width="1.200"/>',
  axes: axes + '<text x="9" y="8" font-size="8" font-weight="bold" font-family="Liberation Sans" fill="#777">Z</text><text x="20" y="13" font-size="8" font-weight="bold" font-family="Liberation Sans" fill="#777">Y</text><text x="18" y="24" font-size="8" font-weight="bold" font-family="Liberation Sans" fill="#777">X</text>',
  crossBox: '<path d="M4 4h16v16H4z" fill="#ddd" stroke="#bbb"/><path d="M12 1v22M1 12h22" stroke="#999" stroke-width="1.300"/>',
  circleBox: '<path d="M3 3h18v18H3z" stroke="#999" fill="#f6f6f6"/><circle cx="12" cy="12" r="5" stroke="#777" stroke-width="1.700"/>',
  textIcon: '<text x="0" y="21" font-size="13" font-weight="bold" font-family="Liberation Serif" fill="#888" transform="rotate(-28 8 18)">Text</text><path d="M10 7l5-6" stroke="#bbb" stroke-width="3"/>',
  wireBox: '<path d="M3 7l6-4 11 6v10l-5 4L3 15zM3 7l12 6 5-4M15 13v10" stroke="#aaa" fill="none"/><path d="M5 17l10-3M6 12l6 7" stroke="#ccc"/>',
  cone: '<path d="M3 2l6-1 13 14c-1 4-4 6-9 8z" fill="#eee" stroke="#bbb"/><path d="M3 2l6-1 7 8-9 4z" fill="#aaa"/>',
  circle: '<circle cx="12" cy="12" r="9" stroke="#888" stroke-width="1.500"/>',
  treePath: '<path d="M1 3v10M4 3h3v14h3V3h4v11h3V3h3v8" stroke="#999" stroke-width="1.400"/>' + tree,
  treeBlocks: '<path d="M2 3l6-2 7 2v5H2zM4 9h11v6H4z" fill="#ccc" stroke="#888"/>' + tree,
  linkBox: '<path d="M2 8h8M6 3v18M2 12l8-3v10l-8 3zM10 6v12" stroke="#999" stroke-width="1.300"/><ellipse cx="17" cy="8" rx="3" ry="5" stroke="#999" stroke-width="1.500"/><ellipse cx="20" cy="15" rx="3" ry="5" stroke="#999" stroke-width="1.500"/>',
  undoFunnel: '<path d="M2 6l5-5v3h7c3 0 4 3 3 5-1-2-3-2-4-2H7v3z" fill="#aaa"/><path d="M10 12h13l-5 5v6l-3-2v-4z" fill="#ddd" stroke="#bbb"/>',
  filterOn: '<circle cx="8" cy="7" r="3" stroke="#c02030"/><path d="M8 2v10M3 7h10" stroke="#333"/><path d="M10 10h11l-4 5v6l-3-2v-4z" fill="#e8b030" stroke="#a87818"/>',
  undoAxis: '<path d="M3 6c4-6 10-3 11 2M3 2v5h5" stroke="#888" stroke-width="2"/><circle cx="16" cy="16" r="4" stroke="#888"/><path d="M16 9v14M9 16h14" stroke="#888"/>',
  undoTree: '<path d="M1 5c4-5 5 3 9-1 3-2 4 1 3 4M1 8c3 1 6 2 8-2" stroke="#aaa" stroke-width="2"/>' + tree,
  hexDot: '<path d="M6 2h12l5 10-5 10H6L1 12z" stroke="#888" stroke-width="1.200"/><circle cx="12" cy="12" r="2" fill="#888"/>',
  dashRect: '<path d="M4 4h17v16H4z" stroke="#777" stroke-dasharray="3 2"/><path d="M2 2h4v4H2zM19 18h4v4h-4z" fill="#888"/>',
  softBox: '<path d="M1 13L10 4c3-2 12 0 12 4v8l-9 5-12-2z" fill="#eee" stroke="#999"/><path d="M1 13c5-1 8 0 12 8M7 8c5-1 9 0 12 8M22 8l-10 3" stroke="#999"/>',
  cubeOn: '<path d="M2 7l8-5 13 3-9 5z" fill="#dcebff" stroke="#222a80"/><path d="M2 7l12 3v13L2 18z" fill="#55aaff" stroke="#2244a0"/><path d="M14 10l9-5v12l-9 6z" fill="#1d5fd8" stroke="#203888"/><path d="M10 2v12l12 4M10 2l13 3" stroke="#e03040" stroke-width="1.300"/>',
  wheel: '<ellipse cx="12" cy="6" rx="9" ry="3" fill="#ccc"/><path d="M5 3l7-2 7 4M7 8h10v11H7z" fill="#e4e4e4" stroke="#aaa"/><path d="M3 19l8-3 10 2-8 5z" fill="#ccc" stroke="#aaa"/>',
  wheelDoc: '<path d="M1 3h11v10H1zM8 10h12v12H8z" fill="#f2f2f2" stroke="#999" stroke-width="1.300"/><path d="M10 14h8M10 17h8M10 20h8M3 6h5M3 9h5" stroke="#aaa"/><circle cx="18" cy="5" r="4" fill="#ccc"/>',
  mouldBox: '<path d="M2 9l4-4 4 2v14H2z" fill="#bbb"/><path d="M12 4h10v9l-4 5h-6z" fill="#d4d4d4"/><path d="M18 4h4v9l-4 5z" fill="#aaa"/>',
  cutArrow: cut + '<path d="M8 14h8v-3l7 4-7 4v-3H8z" fill="#aaa"/><path d="M1 20l8-3M2 17l6 5" stroke="#bbb"/>',
  boltBox: '<path d="M3 2h12v20H3z" fill="#999"/><path d="M12 5l-6 8h6l-5 7" stroke="#eee" stroke-width="2"/><path d="M19 3v18" stroke="#aaa"/>',
  boxTurn: '<path d="M9 3l11-2 2 3v18H7v-8l2-3z" fill="#d8d8d8" stroke="#b8b8b8"/><path d="M9 12h10v9H7" fill="#eee"/><path d="M2 4v6h6M6 8l3 2-3 3" stroke="#999" stroke-width="1.500"/>',
  gridBox: '<path d="M0 0h24v24H0z" fill="#e2e2e2"/><path d="M4 6h18v17H4z" fill="#f2f2f2"/><path d="M4 6h18v17H4zM4 11h18M4 16h18M10 6v17M16 6v17" stroke="#aaa"/><path d="M3 2v5h6" stroke="#888" stroke-width="1.500"/>',
  globeG: '<circle cx="12" cy="12" r="9" fill="#e2e2e2" stroke="#bbb"/><path d="M5 8c4-5 8-3 8 1 5-1 7 2 5 6M4 15c3-5 6 0 8 4" stroke="#aaa" stroke-width="2.500"/>',
  letterA: '<path d="M1 4h18v18H1z" fill="#f6f6f6" stroke="#aaa"/><text x="3" y="19" font-size="17" font-weight="bold" font-family="Liberation Serif" fill="#777">A</text><path d="M16 9l7-8" stroke="#999" stroke-width="2.500"/>',
  pencil: '<path d="M3 17L18 2l4 1v4L9 21l-5 1z" fill="#d4d4d4"/><path d="M5 19L20 4" stroke="#aaa" stroke-width="2"/>',
  folderG: '<path d="M1 8h12V5h4v3h6v14H1z" fill="#f0f0f0" stroke="#bbb"/><path d="M12 1c4 0 4 3 4 5h3l-4 5-4-5h3c0-2 0-3-2-4z" fill="#aaa"/><path d="M14 17h9M14 20h9" stroke="#bbb"/>',
  pages: '<path d="M3 3v20h14M6 1h10l5 5v14H6z" stroke="#666" fill="#fff" stroke-width="1.200"/><path d="M16 1v5h5" stroke="#666"/>',
  ramp: '<path d="M0 24V18L14 7h10v17z" fill="#b0b0b0"/><circle cx="6" cy="11" r="4" fill="#e4e4e4" stroke="#aaa"/><path d="M5 0h3v8H5z" fill="#bbb"/>',
  sheetPin: '<path d="M3 6h19v16H3z" fill="#f4f4f4" stroke="#bbb"/><path d="M8 9v9" stroke="#888" stroke-width="1.500"/><circle cx="8" cy="19" r="2.500" fill="#999"/><path d="M2 3h8M13 15h9M13 19h9" stroke="#aaa"/>',
  printer: '<path d="M7 9l3-8 9 1-2 9z" fill="#fff" stroke="#aaa"/><path d="M1 13l7-4 15 3v6l-10 4-12-4z" fill="#d4d4d4" stroke="#aaa"/><path d="M4 15l9 3 9-4M4 16v2l8 3" stroke="#888"/>',
  swap: '<path d="M1 10V4h15V1l7 5-7 5V8H5v2z" fill="#c4c4c4" stroke="#aaa"/><path d="M23 14v6H9v3l-7-5 7-5v3h10v-2z" fill="#c4c4c4" stroke="#aaa"/>',
  drillCyl: '<path d="M3 2h5v17l-2 3-3-3z" fill="#eee" stroke="#888"/><path d="M3 7l5 3M3 11l5 3M3 15l5 3" stroke="#888"/><path d="M13 3c0-2 9-2 9 0v7c0 2-9 2-9 0z" fill="#d0d0d0" stroke="#888"/><path d="M17 12v5l-6 5h11" stroke="#bbb" stroke-width="2"/>',
  screen: '<path d="M1 3h22v18H1z" fill="#aaa"/><path d="M4 6h16v10H4z" fill="#ddd"/>',
  clockBig: '<path d="M0 0h24v24H0z" fill="#efefef"/><circle cx="12" cy="12" r="8.500" fill="#fafafa" stroke="#c4c4c4" stroke-width="2"/><path d="M12 6v7h5" stroke="#aaa" stroke-width="1.500"/>',
  newGeo: '<path d="M8 9l4-4h11v11l-4 5H8z" fill="#8aa8ff" stroke="#2a3cb0"/><path d="M19 9l4-4v11l-4 5z" fill="#3f62d8" stroke="#2a3cb0"/><path d="M8 9h11" stroke="#2a3cb0"/><circle cx="6" cy="18" r="4.500" fill="#ffd84a" stroke="#d83020" stroke-width="1.500"/><path d="M7 0v12M1 6h12M3 2l8 8M11 2l-8 8" stroke="#e8d020" stroke-width="1.500"/>',
  wrenchY: '<path d="M1 19l4-1 8-8c-2-5 2-9 7-9l-3 4 2 3h4c1 5-3 7-7 6l-7 6c0 4-3 4-5 3l1-3z" fill="#ffd23c" stroke="#8f6400"/>',
  wrenchG: '<path d="M1 19l4-1 8-8c-2-5 2-9 7-9l-3 4 2 3h4c1 5-3 7-7 6l-7 6c0 4-3 4-5 3l1-3z" fill="#cfcabc" stroke="#a8a498"/>',
  part: '<path d="M1 9l8-5 4 2v3l4-2V4l6 3v10l-11 6-11-5z" fill="#cacbd2" stroke="#a6a8b2"/><path d="M1 9l4 2 8-5M5 11v4l4 2M9 17v-4l8-5M9 13l4 2 10-6M12 15v8" stroke="#a0a2ac"/>',
  torch: torchShape('#b0b6c8', '#bcc1d0', '#d8d6bc', '#969cb0'),
  torchOn: torchShape('#2c62f0', '#1a38c0', '#f4e040', '#0a1a70'),
  faceBound: '<path d="M2 9v8l10 6 10-5v-8M12 13v10M2 17l10-5 10 6" stroke="#222" stroke-dasharray="2 1"/><path d="M2 7l10-4 10 4-10 6zM6 1l3 5M18 1l-4 5M0 5l6 3M24 5l-6 4" stroke="#e84830" stroke-width="1.200"/>',
  checkBody: '<path d="M1 9l6-4c6 0 12 3 16 8v6l-7 2-15-6z" fill="#b81414" stroke="#400"/><path d="M1 9l6-4c6 0 12 3 16 8l-7 3z" fill="#f02828" stroke="#500"/><ellipse cx="11" cy="10" rx="4.500" ry="2" transform="rotate(15 11 10)" fill="#8c0c0c" stroke="#300"/>',
  checkBound: '<path d="M1 12v5l15 6 7-3v-5l-7 3z" stroke="#2848c8" fill="#c8d4f4"/><path d="M1 12l6-4c6 0 12 3 16 7l-7 3z" fill="#fff" stroke="#d82828" stroke-width="1.300"/><path d="M2 4l6 4M14 3l-1 6M17 8l5-1" stroke="#d82828" stroke-width="1.300"/><ellipse cx="11" cy="13" rx="4.500" ry="2" transform="rotate(15 11 13)" stroke="#3858e0"/>',
  newMethod: '<path d="M1 9v14h22V9M1 13c4-3 6 2 10-1s7 3 12-2M1 16h22M1 21l3-3 3 3 3-3 3 3 3-3 3 3 4-3" stroke="#1d5080" stroke-width="1.400"/><path d="M7 0v12M1 6h12M3 2l8 8M11 2l-8 8" stroke="#e2cc20" stroke-width="1.500"/>',
  cutParam: '<path d="M2 13h20v9H2z" fill="#fff" stroke="#111" stroke-width="1.300"/><path d="M3 20l6-6M6 21l7-7M11 21l7-7M16 21l5-6" stroke="#3030a0"/><path d="M4 8h13" stroke="#1010b0" stroke-width="1.200"/><path d="M15 5l5 3-5 3z" fill="#1010b0"/>',
  nonCut: '<path d="M2 14h20v9H2z" fill="#fff" stroke="#111" stroke-width="1.300"/><path d="M3 21l6-6M6 22l7-7M11 22l7-7M16 22l5-6" stroke="#3030a0"/><path d="M6 4h13M2 5v5M22 12V7" stroke="#b81010" stroke-width="1.300"/><path d="M9 1L4 4l5 3zM0 9h5l-2.500 4zM19 8h5l-2-4z" fill="#b81010"/>',
  feed: '<path d="M6 0h6v16H6z" fill="#4a62d8"/><path d="M6 4l6-2M6 8l6-2M6 12l6-2M6 15l6-2" stroke="#14208a"/><path d="M14 3c6 3 0 7-6 6C1 9-1 5 4 3" stroke="#b82020" stroke-width="2"/><path d="M11 17h7v-3l6 5-6 4v-3h-7z" fill="#3a50d0"/>',
  isoStack: '<path d="M4 5l5-3 6 3v6l7 3v6l-7 3-11-4z" fill="#eee" stroke="#999"/><path d="M4 5l5 3 6-3M9 8v13M4 12l5 2 6-3M15 17l7-3M15 17v6" stroke="#999"/>',
  linkArrow: '<path d="M8 3h14v4H8zM8 5H3v8M1 11l2 3 2-3" stroke="#999" stroke-width="1.200"/><ellipse cx="16" cy="14" rx="3" ry="4" stroke="#aaa" stroke-width="1.500"/><ellipse cx="18" cy="19" rx="3" ry="4" stroke="#aaa" stroke-width="1.500"/>',
  treeInfo: '<path d="M0 12h9l6-9M9 12h14M9 12l5 8M14 2h8v3h-8zM14 9h8v3h-8z" stroke="#999" stroke-width="1.200"/><path d="M13.500 13.500h9v9h-9z" fill="#fff" stroke="#888"/><path d="M18 15v1M18 17v4" stroke="#666" stroke-width="2"/>',
  twoCubes: '<path d="M11 4l5-3 6 2v8l-5 3-6-3zM1 13l5-3 6 3v7l-5 3-6-3z" fill="#e4e4e4" stroke="#444"/><path d="M1 13l6 3 5-3M7 16v7M11 4l6 3 5-4M17 7v7" stroke="#444"/><path d="M9 11l5-2" stroke="#d03030" stroke-width="2"/>',
  rainbow: '<path d="M1 18C1 9 6 3 13 1c4 4 6 8 6 12l-5 9z" fill="#66c850"/><path d="M1 18C1 9 6 3 13 1c-4 6-5 12-4 20z" fill="#f4c030"/><path d="M1 18c0-5 2-9 5-12-1 5-1 9 0 14z" fill="#e84830"/><path d="M10 7v12M10 12l10 2M10 18l10 3" stroke="#333"/><path d="M8 6h3v3H8zM18 12h3v3h-3zM18 19h3v3h-3zM9 17h3v3H9z" fill="#fff" stroke="#c83030"/>',
  chain: '<ellipse cx="9" cy="7" rx="4" ry="5.500" stroke="#bbb" stroke-width="2"/><ellipse cx="13" cy="16" rx="4" ry="6" stroke="#bbb" stroke-width="2"/>',
  plus: '<path d="M12 3v18M3 12h18" stroke="#888" stroke-width="1.500"/>',
  liftBox: '<path d="M6 1h15l-4 4H2zM2 16l6-2h12v5l-5 3H2z" fill="#ddd" stroke="#999"/><path d="M11 17V7M8 10l3-4 3 4" stroke="#888" stroke-width="1.500"/>',
  cylPlane: '<path d="M7 16h15l-5 6H1z" fill="#eee" stroke="#aaa"/><path d="M8 3c0-2 8-2 8 0v16H8z" fill="#e4e4e4" stroke="#999"/>',
  coloredBox: '<path d="M2 4l5-3h12v14l-5 4H2z" fill="#6f9ce8" stroke="#3050a0"/><path d="M8 4h11v13H8z" fill="#f4cf7a" stroke="#b08830"/><path d="M2 17h13l5-2v4l-5 3H2z" fill="#3c62c8"/><path d="M19 19h4v4h-4z" fill="#fff" stroke="#3050a0"/>',
  meshBox: '<path d="M2 6l7-4 12 3v13l-8 4-11-4zM2 6l11 4 8-5M13 10v12M2 18l11-8M2 6l11 16M13 22l8-17" stroke="#999" fill="#eee"/>',
};
const vivid = new Set(['globe', 'redbox', 'diamond', 'monitor', 'wrenchY', 'redarrow', 'bluecurve', 'ruler', 'bluecube', 'generate', 'report', 'filterOn', 'cubeOn', 'rainbow', 'coloredBox', 'twoCubes']);
const full = '<svg class="h-6 w-6 shrink-0 overflow-visible" viewBox="0 0 24 24" fill="none" aria-hidden="true">';
const faded = '<svg class="h-6 w-6 shrink-0 overflow-visible opacity-75" viewBox="0 0 24 24" fill="none" aria-hidden="true">';
const toolIcon = n => (vivid.has(n) ? full : faded) + icons[n] + '</svg>';
const dot = '<svg class="h-[3px] w-[5px]" viewBox="0 0 5 3"><path d="M0 0h5L2.500 3z" fill="#111"/></svg>';
const cell = n => {
  if (n === '|') return '<span class="h-[26px] w-[6px] shrink-0"><span class="ml-[2px] block h-full w-px bg-[#dcdcdc]"></span></span>';
  if (n === ':') return '<span class="flex h-[26px] w-2 shrink-0 justify-center"><span class="w-[2px] border-l-2 border-dotted border-[#aaa]"></span></span>';
  if (n === '.') return '<button type="button" aria-label="更多" class="flex h-6 w-3 shrink-0 items-center justify-center">' + dot + '</button>';
  if (n === '_') return '<button type="button" aria-label="工具条选项" class="flex h-6 w-3 shrink-0 items-end justify-center pb-1">' + dot + '</button>';
  if (n === '~') return '<span class="w-3 shrink-0"></span>';
  if (n === 'pad') return '<span class="w-[332px] shrink-0"></span>';
  if (n === 'combo') return '<input aria-label="命令查找" class="h-[26px] w-[124px] shrink-0 border border-[#b0b0b0]">';
  if (n === 'combos') return '<input aria-label="图层" class="h-[26px] w-[49px] shrink-0 border border-[#b0b0b0]">';
  if (n === 'filterOn') return '<button type="button" aria-label="filterOn" class="mx-[2px] flex h-[22px] w-[22px] shrink-0 items-center justify-center border border-[#d03a48]">' + toolIcon(n) + '</button>';
  if (n === 'cubeOn') return '<button type="button" aria-label="cubeOn" class="flex h-[30px] w-[31px] shrink-0 items-center justify-center border border-[#a0c0bc] bg-[#c6d6d4]">' + toolIcon(n) + '</button>';
  return '<button type="button" aria-label="' + n + '" class="flex h-[31px] w-[31px] shrink-0 items-center justify-center">' + toolIcon(n) + '</button>';
};
document.querySelectorAll('[data-bar]').forEach(b => { b.innerHTML = b.dataset.bar.split(' ').map(cell).join(''); });
document.querySelectorAll('[data-icon]').forEach(b => { b.innerHTML = full + icons[b.dataset.icon] + '</svg>'; });
const rows = document.getElementById('rows');
for (let i = 5; i < 35; i++) {
  const tr = document.createElement('tr');
  tr.className = i % 2 ? 'h-5 border-b border-[#ebebeb] bg-[#f9f9f9]' : 'h-5 border-b border-[#ebebeb]';
  tr.innerHTML = '<td></td><td class="border-r border-[#ebebeb]"></td><td></td>';
  rows.append(tr);
}
</script>
</body>
</html>
